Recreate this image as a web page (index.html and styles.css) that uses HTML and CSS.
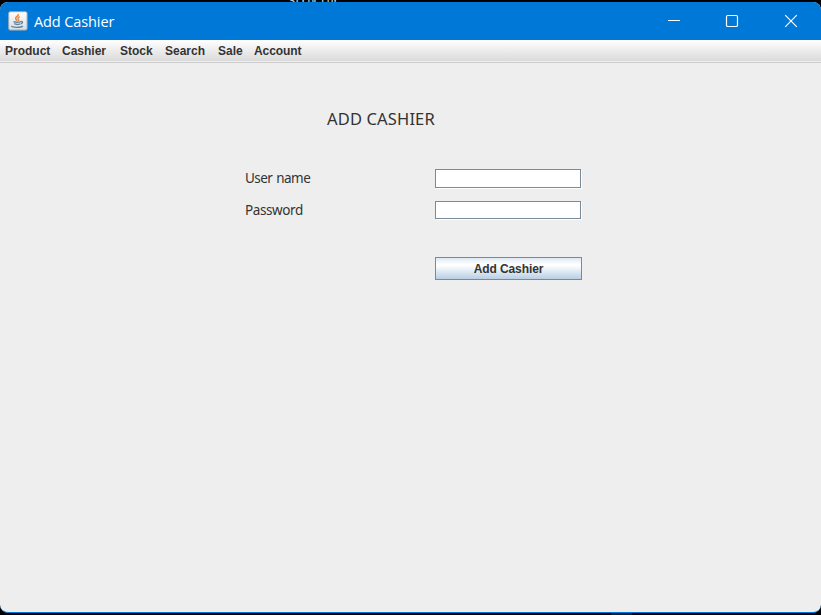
FILE: index.html
```html
<!DOCTYPE html>
<html lang="en">
<head>
<meta charset="utf-8">
<title>Add Cashier</title>
<link rel="stylesheet" href="styles.css">
</head>
<body>
<div class="backdrop" aria-hidden="true">Structur</div>
<div class="taskbar-glow"></div>
<main class="window">
  <header class="titlebar">
    <svg class="app-icon" width="20" height="20" viewBox="0 0 20 20">
      <defs><linearGradient id="tile" x1="0" y1="0" x2="0" y2="1"><stop offset="0" stop-color="#fff"/><stop offset="1" stop-color="#d9dcdd"/></linearGradient></defs>
      <rect x=".7" y=".7" width="18.4" height="18.4" rx="1.5" fill="url(#tile)" stroke="#98a9b5"/>
      <path d="M10.300 3c.8 2-3.200 2.800-2.600 4.700.2.800 1.200 1.300 1.300 2.200M11.700 5.700c-2.500 1.300-1.800 2-1.200 2.700.4.500.2 1-.3 1.400" fill="none" stroke="#e8853d" stroke-width="1.500"/>
      <path d="M5.500 10.700c1.500.8 5.500.7 7.300 0M6.200 12.700c1.500.8 4.400.7 5.800.1M12.800 10.500c2.600-.3 2 2-.3 2.600M3.800 14.800c-.8 2 9.500 2 11 .2" fill="none" stroke="#5f86a5" stroke-width="1.400"/>
    </svg>
    <h1 class="caption">Add Cashier</h1>
    <div class="controls">
      <svg width="58" height="38" viewBox="0 0 58 38"><path d="M22 18.500h12" stroke="#fff"/></svg>
      <svg width="58" height="38" viewBox="0 0 58 38"><rect x="22.500" y="13.500" width="11" height="11" rx="1.300" fill="none" stroke="#fff" stroke-width="1.200"/></svg>
      <svg width="59" height="38" viewBox="0 0 59 38"><path d="M23.200 13.200l11.600 11.600M34.800 13.200L23.200 24.800" stroke="#fff" stroke-width="1.200"/></svg>
    </div>
  </header>
  <nav class="menubar">
    <span class="menu product">Product</span><span class="menu cashier">Cashier</span><span class="menu stock">Stock</span><span class="menu search">Search</span><span class="menu sale">Sale</span><span class="menu account">Account</span>
  </nav>
  <form class="form">
    <h2 class="heading">ADD CASHIER</h2>
    <label class="label user" for="user">User name</label>
    <input class="field" id="user" type="text">
    <label class="label pass" for="pass">Password</label>
    <input class="field short" id="pass" type="password">
    <button class="submit" type="button">Add Cashier</button>
  </form>
</main>
</body>
</html>
```

FILE: styles.css
```css
* { box-sizing: border-box; }
body {
  margin: 0;
  height: 615px;
  padding-top: 2px;
  overflow: hidden;
  position: relative;
  background: #000;
  font-family: "Liberation Sans", sans-serif;
  color: #333;
}
.backdrop {
  position: absolute;
  top: -4px;
  left: 288px;
  font: 12px/12px "Liberation Mono", monospace;
  letter-spacing: -.8px;
  color: #ddd;
}
.taskbar-glow {
  position: absolute;
  left: 611px;
  bottom: 0;
  width: 21px;
  height: 2px;
  background: #03202f;
}
.window {
  position: relative;
  height: 611px;
  border-radius: 8px;
  border-bottom: 1px solid #0078d7;
  overflow: hidden;
  background: #eee;
}
.titlebar {
  display: flex;
  align-items: center;
  height: 38px;
  padding-left: 8px;
  background: #0078d7;
}
.app-icon { margin-right: 6px; }
.caption {
  margin: 0;
  padding-top: 2px;
  font: 14.5px/36px "Open Sans", sans-serif;
  letter-spacing: -.1px;
  color: #fff;
}
.controls { display: flex; margin-left: auto; }
.menubar {
  display: flex;
  height: 23px;
  padding-left: 5px;
  border-bottom: 1px solid #ccc;
  background: linear-gradient(#fff, #dadada 21px, #eee 21px);
}
.menu {
  font-size: 12px;
  font-weight: 700;
  line-height: 22px;
}
.product { width: 57px; }
.cashier { width: 58px; }
.stock { width: 45px; }
.search { width: 53px; }
.sale { width: 36px; }
.account { letter-spacing: -.1px; }
.form {
  display: grid;
  grid-template-columns: 190px 147px;
  grid-template-rows: 24px 38px 19px 13px 18px 38px 23px;
  padding: 44px 0 0 245px;
}
.heading {
  grid-column: 1 / 3;
  margin: 0 0 0 82px;
  font: 16.5px/24px "Noto Sans", sans-serif;
  letter-spacing: .15px;
}
.label {
  font: 13.5px/19px "Noto Sans", sans-serif;
  letter-spacing: -.55px;
  word-spacing: 1px;
}
.user, #user { grid-row: 3; }
.pass, #pass { grid-row: 5; }
.pass { letter-spacing: -.4px; }
.field {
  width: 146px;
  height: 19px;
  padding: 0 2px;
  border: 1px solid #7a8a99;
  border-radius: 0;
  outline: 0;
  background: #fff;
  box-shadow: 1px 1px #fff;
}
.short { height: 18px; }
.submit {
  grid-row: 7;
  grid-column: 2;
  padding: 1px 0 0;
  border: 1px solid #7a8a99;
  border-radius: 0;
  background: linear-gradient(#dde8f3, #fff 30%, #fff 35%, #b8cfe5);
  color: #333;
  font: bold 12px/20px "Liberation Sans", sans-serif;
  letter-spacing: -.1px;
}
```
